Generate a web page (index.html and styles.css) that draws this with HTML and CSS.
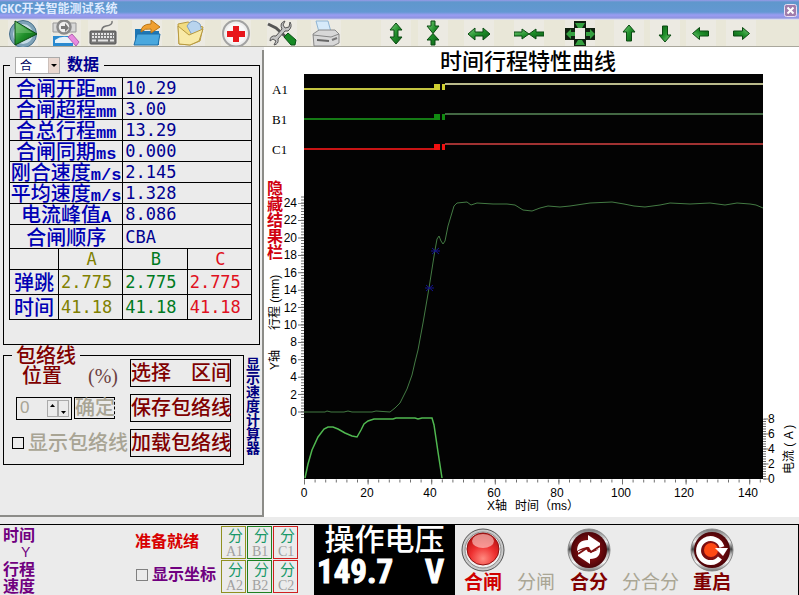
FILE: index.html
```
<!DOCTYPE html>
<html lang="zh-CN">
<head>
    <meta charset="UTF-8">
    <meta name="viewport" content="width=device-width, initial-scale=1.0">
    <title>GKC开关智能测试系统</title>
    <link rel="stylesheet" href="styles.css">
</head>
<body>
    <svg width="0" height="0" class="defs">
        <defs>
            <linearGradient id="green" x1="0" y1="0" x2="1" y2="1">
                <stop offset="0" stop-color="#7fd07f"/>
                <stop offset="0.5" stop-color="#1f8f2a"/>
                <stop offset="1" stop-color="#0a5a14"/>
            </linearGradient>
            <linearGradient id="steel" x1="0" y1="0" x2="0" y2="1">
                <stop offset="0" stop-color="#777"/>
                <stop offset="0.3" stop-color="#eee"/>
                <stop offset="0.48" stop-color="#444"/>
                <stop offset="0.6" stop-color="#bbb"/>
                <stop offset="0.8" stop-color="#f4f4f4"/>
                <stop offset="1" stop-color="#777"/>
            </linearGradient>
            <radialGradient id="lamp" cx="0.5" cy="0.8" r="0.8">
                <stop offset="0" stop-color="#ff8a80"/>
                <stop offset="0.5" stop-color="#ee3030"/>
                <stop offset="1" stop-color="#b00c0c"/>
            </radialGradient>
            <radialGradient id="dark">
                <stop offset="0" stop-color="#b01818"/>
                <stop offset="1" stop-color="#4c0408"/>
            </radialGradient>
            <path id="arrow" d="M15 5 L21 12 H17.500 V21 H12.500 V12 H9 Z"/>
        </defs>
    </svg>

    <header class="titlebar">
        <span>GKC开关智能测试系统</span>
        <button class="close" aria-label="关闭">
            <svg width="13" height="13" viewBox="0 0 13 13"><rect x="0.500" y="0.500" width="12" height="12" rx="2" fill="#a07cab" stroke="#e8e0f4"/><path d="M3.500 3.500 L9.500 9.500 M9.500 3.500 L3.500 9.500" stroke="#fff" stroke-width="2"/></svg>
        </button>
    </header>

    <nav class="toolbar">
        <button aria-label="开始"><svg viewBox="0 0 30 27"><circle cx="15" cy="14" r="13.500" fill="#7fa3b8" stroke="#48708a"/><circle cx="15" cy="14" r="10" fill="#c5dbe6"/><path d="M7 1 L29 14 L7 25 Z" fill="url(#green)" stroke="#0c4a12"/><path d="M8 3 L25 13 H8 Z" fill="#7cc47c" opacity="0.5"/></svg></button>
        <button aria-label="查询"><svg viewBox="0 0 30 27"><path d="M2 3 H25 V12 H2 Z" fill="#d8d8d8" stroke="#999"/><path d="M2 16 H22 V26 H2 Z" fill="#2a8ad0"/><path d="M4 20 Q12 14 22 19 V23 H4 Z" fill="#e6f2fa"/><circle cx="13" cy="7" r="6.500" fill="#eee" stroke="#8a8a8a" stroke-width="2.500"/><path d="M10 6 h4 v-3 l4 5 l-4 4 v-3 h-4z" fill="#777"/><path d="M17 17 L21 14 L28 22 L25 26 Z" fill="#e88ae0" stroke="#b060b0"/></svg></button>
        <button aria-label="键盘"><svg viewBox="0 0 30 27"><path d="M14 12 Q13 7 18 6 Q25 5 24 1" fill="none" stroke="#777" stroke-width="1.500"/><rect x="2" y="11" width="26" height="13" rx="1" fill="#767676" stroke="#555"/><path d="M4 14 H26 M4 17 H26" stroke="#e4e4e4" stroke-width="2" stroke-dasharray="2 1"/><path d="M4 20.500 H8 M10 20.500 H20 M22 20.500 H26" stroke="#e4e4e4" stroke-width="2"/></svg></button>
        <button aria-label="打开"><svg viewBox="0 0 30 27"><path d="M3 9 H10 L12 11 H27 V25 H3 Z" fill="#1d76b4"/><path d="M5 14 H28 L26 25 H2 Z" fill="#4aa8de" stroke="#1d6fa8"/><path d="M9 12 Q9 4 19 4 V0 L28 7 L19 13 V9 Q13 8 9 12Z" fill="#f0a030" stroke="#b87414"/></svg></button>
        <button aria-label="文件夹"><svg viewBox="0 0 30 27"><path d="M3 4 L13 2 L28 7 L25 21 L15 25 L4 24 Z" fill="#f2dc80" stroke="#b89a40"/><path d="M12 6 Q17 -3 25 4 L27 12 L17 15 Z" fill="#b8d4ee" stroke="#7fa0c4"/><path d="M3 6 L14 15 L28 9 L24 21 L15 25 L4 24 Z" fill="#f8eaa8" stroke="#b89a40"/></svg></button>
        <button aria-label="诊断"><svg viewBox="0 0 30 27"><circle cx="15" cy="13.500" r="13" fill="#eee" stroke="#a2a2a2" stroke-width="2"/><circle cx="15" cy="13.500" r="10" fill="#f8f8f8"/><path d="M12 6 h6 v5 h6 v6 h-6 v5 h-6 v-5 h-6 v-6 h6z" fill="#e8161c"/></svg></button>
        <button aria-label="设置"><svg viewBox="0 0 30 27"><path d="M1 4 L9 8 L20 18" fill="none" stroke="#555" stroke-width="3"/><path d="M17 17 L21 13 L29 20 L28 25 L24 25 Z" fill="#168a24" stroke="#0a5014"/><path d="M18 1 L16 5 L18 8 L22 7 L23 2 Q26 7 21 11 L18 11 L11 19 Q12 24 7 25 L9 21 L6 19 L3 21 Q3 15 9 16 L15 9 Q12 3 18 1Z" fill="#c4c4c4" stroke="#555"/></svg></button>
        <button aria-label="打印"><svg viewBox="0 0 30 27"><path d="M5 1 L17 1 L20 12 H8 Z" fill="#d6eafa" stroke="#8fb4d4"/><path d="M2 14 L8 10 H24 L28 14 V23 L22 26 H3 Z" fill="#d8d8d8" stroke="#888"/><path d="M2 15 L20 17 L28 14" fill="none" stroke="#888"/><path d="M6 20 L18 21" stroke="#666" stroke-width="2"/><path d="M21 20 L26 18" stroke="#777" stroke-width="2"/></svg></button>

        <button aria-label="纵向放大"><svg viewBox="0 0 30 27"><path d="M15 3 L21 10 H17 V17 H21 L15 24 L9 17 H13 V10 H9 Z" class="ar"/></svg></button>
        <button aria-label="纵向缩小"><svg viewBox="0 0 30 27"><path d="M13 1 H17 V6 H21 L15 13.500 L9 6 H13 Z M13 25 H17 V20 H21 L15 13.500 L9 20 H13 Z" class="ar"/></svg></button>
        <button aria-label="横向放大"><svg viewBox="0 0 30 27"><path d="M4 14 L11 8 V12 H19 V8 L26 14 L19 20 V16 H11 V20 Z" class="ar"/></svg></button>
        <button aria-label="横向缩小"><svg viewBox="0 0 30 27"><path d="M0 12 H8 V9 L15 14 L8 19 V16 H0 Z M30 12 H22 V9 L15 14 L22 19 V16 H30 Z" class="ar"/></svg></button>
        <button aria-label="全部显示"><svg viewBox="0 0 30 27"><path d="M0 8 H10 V20 H0 Z M20 8 H30 V20 H20 Z M9 1 H21 V8 H9 Z M9 19 H21 V26 H9 Z" fill="#102010"/><path d="M1 14 L6 9 V12 H10 V16 H6 V19 Z M30 14 L25 9 V12 H21 V16 H25 V19 Z M10 3 H20 L17 8 H13 Z M10 25 H20 L17 20 H13 Z" fill="#35a040"/></svg></button>
        <button aria-label="上移"><svg viewBox="0 0 30 27"><use href="#arrow" class="ar"/></svg></button>
        <button aria-label="下移"><svg viewBox="0 0 30 27"><use href="#arrow" class="ar" transform="rotate(180 15 13.500)"/></svg></button>
        <button aria-label="左移"><svg viewBox="0 0 30 27"><use href="#arrow" class="ar" transform="rotate(-90 15 13.500)"/></svg></button>
        <button aria-label="右移"><svg viewBox="0 0 30 27"><use href="#arrow" class="ar" transform="rotate(90 15 13.500)"/></svg></button>
    </nav>

    <main class="main">
        <aside class="panel">
            <fieldset class="data">
                <legend>
                    <span class="pick"><select aria-label="操作"><option>合</option><option>分</option></select></span>
                    数据
                </legend>
                <table>
                    <colgroup><col class="c1"><col class="c2"><col class="c2"><col class="c2"></colgroup>
                    <tr><th colspan="2">合闸开距<i>mm</i></th><td colspan="2">10.29</td></tr>
                    <tr><th colspan="2">合闸超程<i>mm</i></th><td colspan="2">3.00</td></tr>
                    <tr><th colspan="2">合总行程<i>mm</i></th><td colspan="2">13.29</td></tr>
                    <tr><th colspan="2">合闸同期<i>ms</i></th><td colspan="2">0.000</td></tr>
                    <tr><th colspan="2">刚合速度<i>m/s</i></th><td colspan="2">2.145</td></tr>
                    <tr><th colspan="2">平均速度<i>m/s</i></th><td colspan="2">1.328</td></tr>
                    <tr><th colspan="2">电流峰值<i>A</i></th><td colspan="2">8.086</td></tr>
                    <tr class="order"><th colspan="2">合闸顺序</th><td colspan="2">CBA</td></tr>
                    <tr class="phase"><td></td><td class="a">A</td><td class="b">B</td><td class="c">C</td></tr>
                    <tr class="tall"><th>弹跳</th><td class="a">2.775</td><td class="b">2.775</td><td class="c">2.775</td></tr>
                    <tr class="tall"><th>时间</th><td class="a">41.18</td><td class="b">41.18</td><td class="c">41.18</td></tr>
                </table>
            </fieldset>

            <div class="lower">
                <fieldset class="envelope">
                    <legend>包络线</legend>
                    <div class="env-grid">
                        <label class="pos" for="pos">位置 <span>(%)</span></label>
                        <button class="box">选择　区间</button>
                        <div class="row">
                            <span class="spin">
                                <input id="pos" type="text" value="0" disabled>
                                <button aria-label="增加"><svg width="9" height="15" viewBox="0 0 9 15"><path d="M2 6 L4.500 3 L7 6Z"/></svg></button>
                                <button aria-label="减少"><svg width="9" height="15" viewBox="0 0 9 15"><path d="M2 10 L4.500 13 L7 10Z"/></svg></button>
                            </span>
                            <button class="ok" disabled>确定</button>
                        </div>
                        <button class="box">保存包络线</button>
                        <label class="check off"><input type="checkbox">显示包络线</label>
                        <button class="box">加载包络线</button>
                    </div>
                </fieldset>
                <button class="vertical calc">显示速度计算器</button>
            </div>
        </aside>

        <section class="chart">
            <button class="vertical hide">隐藏结果栏</button>
            <svg class="plot" viewBox="284 47 515 470">
                <text class="title" x="528" y="69" text-anchor="middle">时间行程特性曲线</text>
                <g class="channel">
                    <text x="272" y="94">A1</text>
                    <text x="272" y="124">B1</text>
                    <text x="272" y="154">C1</text>
                </g>
                <rect x="304" y="74" width="459" height="405" fill="#030303"/>

                <!-- contact channels -->
                <path d="M304 89 H434" stroke="#c4c440" stroke-width="2"/>
                <path d="M445 84 H763" stroke="#b9b98a" stroke-width="2"/>
                <path d="M434 84 H440 V90 H434Z M442 84 H445 V90 H442Z" fill="#cfcf30"/>
                <path d="M304 119 H434" stroke="#157a15" stroke-width="2"/>
                <path d="M445 114 H763" stroke="#436843" stroke-width="2"/>
                <path d="M434 114 H440 V120 H434Z M442 114 H445 V120 H442Z" fill="#108a10"/>
                <path d="M304 149 H434" stroke="#c81414" stroke-width="2"/>
                <path d="M445 144 H763" stroke="#a03232" stroke-width="2"/>
                <path d="M434 144 H440 V150 H434Z M442 144 H445 V150 H442Z" fill="#f01010"/>

                <!-- travel -->
                <polyline fill="none" stroke="#437a43" stroke-width="1" points="304,412 325,412 327,411 331,412 344,412 348,411 352,412 372,412 376,411 390,412 395,408 400,403 407,389 412,375 415,362 418,350 423,323 429,288 435,250 437,239 439,236 441,241 443,244 445,241 448,226 454,206 457,203 467,202 471,205 477,203 493,204 507,204 515,205 523,210 532,211 540,208 548,206 560,207 570,206 590,203 612,202 624,204 634,206 645,207 660,205 670,203 690,204 710,203 725,205 737,203 750,204 756,205 763,208"/>
                <path d="M432 248 L439 254 M439 248 L432 254 M431 251 H440 M426 285 L433 291 M433 285 L426 291 M425 288 H434" stroke="#15158c"/>
                <!-- current -->
                <polyline fill="none" stroke="#50b850" stroke-width="1.500" points="305,478 308,464 312,450 318,437 324,429 328,427 333,427 338,429 345,433 352,436 357,437 361,430 364,424 368,421 374,419 393,419 396,418 415,418 418,419 422,418 432,418 434,425 438,452 442,478"/>

                <g class="axis">
                    <path d="M302.500 418 V196" stroke-width="3" stroke-dasharray="1 1.900"/>
                    <path d="M301 412.500 V203" stroke-width="6" stroke-dasharray="1 16.400"/>
                    <path d="M304 481 H763" stroke-width="3" stroke-dasharray="1 9.600"/>
                    <path d="M304 482 H763" stroke-width="5" stroke-dasharray="1 62.600"/>
                    <path d="M764.500 479.500 V419" stroke-width="3" stroke-dasharray="1 1.500"/>
                    <path d="M766 479.500 V418" stroke-width="5" stroke-dasharray="1 14"/>
                </g>
                <g class="num" text-anchor="end">
                    <text x="297" y="207">24</text>
                    <text x="297" y="224">22</text>
                    <text x="297" y="242">20</text>
                    <text x="297" y="259">18</text>
                    <text x="297" y="277">16</text>
                    <text x="297" y="294">14</text>
                    <text x="297" y="312">12</text>
                    <text x="297" y="329">10</text>
                    <text x="297" y="346">8</text>
                    <text x="297" y="364">6</text>
                    <text x="297" y="381">4</text>
                    <text x="297" y="399">2</text>
                    <text x="297" y="416">0</text>
                </g>
                <g class="num" text-anchor="middle">
                    <text x="304" y="497">0</text>
                    <text x="367" y="497">20</text>
                    <text x="430" y="497">40</text>
                    <text x="494" y="497">60</text>
                    <text x="557" y="497">80</text>
                    <text x="621" y="497">100</text>
                    <text x="684" y="497">120</text>
                    <text x="748" y="497">140</text>
                </g>
                <g class="num">
                    <text x="768" y="423">8</text>
                    <text x="768" y="438">6</text>
                    <text x="768" y="453">4</text>
                    <text x="768" y="468">2</text>
                    <text x="768" y="483">0</text>
                </g>
                <g class="name">
                    <text x="487" y="510">X轴</text>
                    <text x="515" y="510">时间（ms）</text>
                    <text transform="translate(279 370) rotate(-90)">Y轴</text>
                    <text transform="translate(279 330) rotate(-90)">行程 (mm)</text>
                    <text transform="translate(793 474) rotate(-90)">电流 ( A )</text>
                </g>
            </svg>
        </section>
    </main>

    <footer class="status">
        <div class="coords">
            <b>时间</b>
            <span>Y</span>
            <b>行程</b>
            <b>速度</b>
        </div>
        <div class="ready">
            <strong>准备就绪</strong>
            <label class="check"><input type="checkbox">显示坐标</label>
        </div>
        <div class="contacts">
            <div class="a">分<span>A1</span></div>
            <div class="b">分<span>B1</span></div>
            <div class="c">分<span>C1</span></div>
            <div class="a">分<span>A2</span></div>
            <div class="b">分<span>B2</span></div>
            <div class="c">分<span>C2</span></div>
        </div>
        <div class="voltage">
            <div>操作电压</div>
            <output><span>149.7</span><span>V</span></output>
        </div>
        <div class="actions">
            <button class="bright">
                <svg width="44" height="44" viewBox="0 0 44 44"><circle cx="22" cy="22" r="21" fill="#c9c9c9" stroke="#555"/><circle cx="22" cy="22" r="18" fill="#f0f0f0" stroke="#8a8a8a"/><circle cx="22" cy="21" r="16" fill="url(#lamp)" stroke="#901010"/><ellipse cx="22" cy="13" rx="11" ry="7" fill="#ffd8d4" opacity="0.6"/></svg>
                合闸
            </button>
            <button disabled>分闸</button>
            <button>
                <svg width="44" height="44" viewBox="0 0 44 44"><circle cx="22" cy="22" r="21" fill="url(#steel)" stroke="#888"/><circle cx="22" cy="22" r="18" fill="url(#dark)"/><path d="M10 23 Q10 12 21 12 V7 L33 15 V21 L24 23 L22 19 Q16 19 10 23Z" fill="#fff"/><path d="M33 20 Q34 31 23 31 V36 L11 28 V23 L19 21 L21 24 Q28 25 33 20Z" fill="#fff"/><path d="M11 26 L20 20 L24 24 L33 18" fill="none" stroke="#7c1010" stroke-width="2"/></svg>
                合分
            </button>
            <button disabled>分合分</button>
            <button>
                <svg width="44" height="44" viewBox="0 0 44 44"><circle cx="22" cy="22" r="21" fill="url(#steel)" stroke="#888"/><circle cx="22" cy="22" r="18" fill="url(#dark)"/><circle cx="21" cy="22" r="7" fill="#ff4a14"/><path d="M30 30 A12 12 0 1 1 32 19" fill="none" stroke="#fff" stroke-width="5"/><path d="M25 20 H38 L33 28 Z" fill="#fff"/></svg>
                重启
            </button>
        </div>
    </footer>
</body>
</html>
```

FILE: styles.css
```
* {
    box-sizing: border-box;
}
body {
    margin: 0;
    background: #ebebeb;
    font-family: "Liberation Sans", "Noto Sans CJK SC", sans-serif;
    font-size: 12px;
    min-height: 100vh;
    display: flex;
    flex-direction: column;
    overflow: hidden;
}
button {
    font: inherit;
    color: inherit;
    background: none;
    border: none;
    padding: 0;
    margin: 0;
}
input {
    margin: 0;
}
.defs {
    position: absolute;
}

/* Title bar */
.titlebar {
    display: flex;
    justify-content: space-between;
    align-items: center;
    height: 20px;
    padding-right: 2px;
    background: linear-gradient(#9a9ae8 0, #5f97cc 2px, #6398d2 12px, #9a9cf2 15px, #8f94e0 18px, #f4f4f0 20px);
    color: #dfeaff;
    font-family: "Liberation Mono", "Noto Sans CJK SC", monospace;
    font-weight: bold;
    line-height: 18px;
}
.close svg {
    display: block;
}

/* Toolbar */
.toolbar {
    display: grid;
    grid-template-columns: 43px 37px 44px 43px 46px 46px 44px 70px 37px 46px 50px 51px 49px 36px 36px 40px 30px;
    height: 27px;
    padding-left: 8px;
    background: #e9e7d8;
    border-bottom: 1px solid #a9a79c;
}
.toolbar button {
    width: 30px;
    height: 26px;
    background: #eceae2;
}
.toolbar svg {
    display: block;
    width: 30px;
    height: 27px;
}
.ar {
    fill: url(#green);
    stroke: #0b4a12;
}

/* Main area */
.main {
    display: grid;
    grid-template-columns: 264px 1fr;
}
.panel {
    padding: 8px 3px 0;
    margin-top: 3px;
    border-right: 2px solid #8c8c88;
    border-bottom: 2px solid #8c8c88;
}
fieldset {
    min-width: 0;
    margin: 0;
    border: 1px solid #000;
}
.data {
    height: 290px;
    margin-top: -3px;
    margin-right: -1px;
    padding: 0 7px 0 5px;
}
.data legend {
    display: flex;
    align-items: center;
    gap: 7px;
    margin-left: 1px;
    padding: 0 5px;
    height: 20px;
    line-height: 20px;
    font-size: 16px;
    font-weight: bold;
    color: #000090;
}
.pick {
    position: relative;
    display: flex;
}
.pick select {
    appearance: none;
    width: 45px;
    height: 17px;
    padding: 0 0 0 4px;
    border: 1px solid #aaa;
    border-radius: 0;
    background: linear-gradient(to right, #fff 32px, #b0a8a4 32px, #ead8d0 33px);
    color: #000060;
    font-family: "Noto Sans CJK SC", sans-serif;
    font-size: 12px;
    line-height: 14px;
}
.pick::after {
    content: "";
    position: absolute;
    right: 3px;
    top: 7px;
    border: 3px solid transparent;
    border-top-color: #000;
    pointer-events: none;
}
table {
    table-layout: fixed;
    width: 100%;
    margin-top: 2px;
    border-collapse: collapse;
}
.c1 {
    width: 49px;
}
th, td {
    height: 21px;
    padding: 0;
    border: 1px solid #000;
    line-height: 20px;
    white-space: nowrap;
}
th {
    color: #0000b4;
    font-size: 20px;
    font-weight: 500;
    font-family: "Noto Sans CJK SC", sans-serif;
}
th i {
    font: bold 17px/10px "Liberation Mono", monospace;
}
td {
    padding-left: 2px;
    color: #000090;
    font-family: "DejaVu Sans Mono", monospace;
    font-size: 17px;
}
.order th, .order td {
    height: 24px;
}
.phase td {
    text-align: center;
}
.tall th, .tall td {
    height: 25px;
}
td.a {
    color: #808000;
}
td.b {
    color: #007a1e;
}
td.c {
    color: #e01020;
}

/* Envelope box */
.lower {
    display: flex;
}
.envelope {
    width: 241px;
    height: 120px;
    padding: 0 12px 0 8px;
}
.envelope legend {
    padding: 0 4px;
    font-size: 20px;
    line-height: 20px;
    font-weight: 500;
    color: #800000;
    font-family: "Noto Sans CJK SC", sans-serif;
}
.env-grid {
    display: grid;
    grid-template-columns: 1fr 101px;
    grid-auto-rows: 28px;
    row-gap: 7px;
    margin-top: -6px;
    align-items: center;
}
.box {
    height: 28px;
    border: 1px solid #000;
    color: #800000;
    font-size: 20px;
    line-height: 24px;
    font-weight: 500;
    white-space: nowrap;
}
.pos {
    display: flex;
    justify-content: space-between;
    padding: 6px 12px 0 10px;
    font-size: 20px;
    line-height: 20px;
    font-weight: 500;
    color: #800000;
}
.pos span {
    font-family: "Liberation Serif", serif;
    font-weight: normal;
    color: #6c4040;
}
.row {
    display: flex;
    gap: 2px;
    padding-left: 4px;
}
.spin {
    display: flex;
    align-items: center;
    width: 56px;
    height: 23px;
    padding-right: 2px;
    border: 1px solid #000;
}
.spin input {
    flex: 1;
    width: 20px;
    padding: 0 0 0 3px;
    border: none;
    background: none;
    color: #a8a494;
    font-size: 17px;
}
.spin button {
    width: 11px;
    height: 17px;
    border: 1px solid #aaa;
}
.spin svg {
    display: block;
}
.ok {
    width: 41px;
    height: 22px;
    border: 1px solid #000;
    border-right-style: dashed;
    color: #a8a494;
    font-size: 20px;
    line-height: 20px;
    font-weight: 500;
    white-space: nowrap;
}
.check {
    display: flex;
    align-items: center;
    gap: 4px;
    white-space: nowrap;
}
.check input {
    appearance: none;
    flex: none;
    width: 12px;
    height: 12px;
    border: 1px solid #808080;
}
.off {
    color: #a8a494;
    font-size: 20px;
    line-height: 24px;
    font-weight: 500;
}
.off input {
    border-color: #000;
}
.vertical {
    writing-mode: vertical-rl;
    text-orientation: upright;
    font-weight: bold;
    white-space: nowrap;
}
.calc {
    align-self: flex-start;
    margin-top: 12px;
    color: #000080;
    font-size: 14px;
    line-height: 15px;
}

/* Chart */
.chart {
    display: grid;
    grid-template-columns: 20px 1fr;
    background: #fff;
}
.hide {
    align-self: start;
    justify-self: start;
    margin-top: 133px;
    color: #d00010;
    font-size: 16px;
    line-height: 18px;
}
.plot {
    display: block;
    width: 100%;
    overflow: visible;
}
.title {
    font-size: 22px;
    font-weight: 500;
}
.channel {
    font-family: "Liberation Serif", serif;
    font-size: 13px;
}
.axis {
    fill: none;
    stroke: #707070;
}
.num {
    font-size: 12px;
}
.name {
    font-size: 12px;
}

/* Status bar */
.status {
    display: flex;
    flex: 1;
    margin-top: 7px;
    border-top: 1px solid #000;
    border-right: 1px solid #000;
    height: 71px;
}
.coords {
    display: flex;
    flex-direction: column;
    width: 132px;
    padding: 2px 3px 0;
    color: #700080;
    font-size: 16px;
    line-height: 17px;
}
.coords span {
    padding-left: 18px;
    font-size: 14px;
}
.ready {
    width: 89px;
    padding: 8px 3px 0;
    font-size: 16px;
    line-height: 17px;
}
.ready strong {
    color: #d80000;
}
.ready .check {
    margin-top: 16px;
    padding-left: 1px;
    color: #700080;
    font-weight: bold;
}
.contacts {
    display: grid;
    grid-template-columns: repeat(3, 25px);
    grid-template-rows: 33px 33px;
    gap: 1px;
    padding-top: 1px;
    margin-right: 16px;
}
.contacts div {
    display: flex;
    flex-direction: column;
    border: 1px solid;
    padding-left: 6px;
    color: #189868;
    font-size: 15px;
    line-height: 17px;
}
.contacts span {
    margin-left: -2px;
    color: #a0a0a0;
    font-family: "Liberation Serif", serif;
    font-size: 14px;
    line-height: 15px;
}
.contacts .a {
    border-color: #909020;
}
.contacts .b {
    border-color: #208020;
}
.contacts .c {
    border-color: #d02020;
}
.voltage {
    width: 141px;
    background: #000;
    color: #fff;
    text-align: center;
    font-size: 30px;
    line-height: 30px;
    font-weight: 500;
}
.voltage output {
    display: flex;
    justify-content: space-between;
    padding: 0 11px 0 3px;
    font-family: "Roboto Condensed", "Liberation Sans", sans-serif;
    font-size: 33px;
    font-weight: bold;
    line-height: 34px;
    -webkit-text-stroke: 1px #fff;
}
.actions {
    display: flex;
    align-items: flex-end;
    gap: 11px;
    padding: 0 0 1px 6px;
}
.actions button {
    display: flex;
    flex-direction: column;
    align-items: center;
    min-width: 40px;
    color: #800000;
    font-size: 19px;
    line-height: 22px;
    font-weight: bold;
    white-space: nowrap;
}
.actions .bright {
    color: #d00000;
}
.actions button:disabled {
    color: #aaa694;
    font-weight: normal;
}
```
